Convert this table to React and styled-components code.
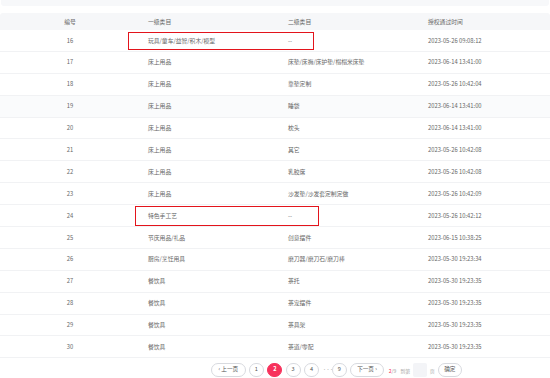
import React from 'react'
import styled, { createGlobalStyle } from 'styled-components'

const GlobalStyle = createGlobalStyle`
  html, body {
    margin: 0;
    padding: 0;
    background: #fff;
  }
  body {
    font-family: "Noto Sans CJK SC", "Noto Sans", sans-serif;
    color: #666;
  }
`

const rows = [
  { id: 16, first: '玩具/童车/益智/积木/模型', second: '--', time: '2023-05-26 09:08:12' },
  { id: 17, first: '床上用品', second: '床垫/床褥/床护垫/榻榻米床垫', time: '2023-06-14 13:41:00' },
  { id: 18, first: '床上用品', second: '靠垫定制', time: '2023-05-26 10:42:04' },
  { id: 19, first: '床上用品', second: '睡袋', time: '2023-06-14 13:41:00', hover: true },
  { id: 20, first: '床上用品', second: '枕头', time: '2023-06-14 13:41:00' },
  { id: 21, first: '床上用品', second: '其它', time: '2023-05-26 10:42:08' },
  { id: 22, first: '床上用品', second: '乳胶席', time: '2023-05-26 10:42:08' },
  { id: 23, first: '床上用品', second: '沙发垫/沙发套定制定做', time: '2023-05-26 10:42:09' },
  { id: 24, first: '特色手工艺', second: '--', time: '2023-05-26 10:42:12' },
  { id: 25, first: '节庆用品/礼品', second: '创意摆件', time: '2023-06-15 10:38:25' },
  { id: 26, first: '厨房/烹饪用具', second: '磨刀器/磨刀石/磨刀棒', time: '2023-05-30 19:23:34' },
  { id: 27, first: '餐饮具', second: '茶托', time: '2023-05-30 19:23:35' },
  { id: 28, first: '餐饮具', second: '茶宠摆件', time: '2023-05-30 19:23:35' },
  { id: 29, first: '餐饮具', second: '茶具架', time: '2023-05-30 19:23:35' },
  { id: 30, first: '餐饮具', second: '茶道/零配', time: '2023-05-30 19:23:35' },
]

const App = () => (
  <>
    <GlobalStyle />
    <Page>
      <TopStrip />
      <Table>
        <HeadRow>
          <Cell center>编号</Cell>
          <Cell>一级类目</Cell>
          <Cell>二级类目</Cell>
          <Cell>授权通过时间</Cell>
        </HeadRow>
        {rows.map((r) => (
          <Row key={r.id} $hover={r.hover}>
            <Cell center>{r.id}</Cell>
            <Cell>{r.first}</Cell>
            <Cell>{r.second}</Cell>
            <Cell>{r.time}</Cell>
          </Row>
        ))}
        <Mark $left={128} $top={19} $width={186} $height={18} />
        <Mark $left={135} $top={192.5} $width={184} $height={20} />
      </Table>
      <Pager>
        <PageButton $size={34.5}>‹ 上一页</PageButton>
        <PageButton>1</PageButton>
        <PageButton $active>2</PageButton>
        <PageButton>3</PageButton>
        <PageButton>4</PageButton>
        <Dots>···</Dots>
        <PageButton>9</PageButton>
        <PageButton $size={33.6}>下一页 ›</PageButton>
        <Count>
          <em>2</em>/9
        </Count>
        <Label>到第</Label>
        <Jump />
        <Label>页</Label>
        <PageButton $size={24}>确定</PageButton>
      </Pager>
    </Page>
  </>
)

const Page = styled.div`
  width: 550px;
  height: 378px;
  overflow: hidden;
`

const TopStrip = styled.div`
  height: 5.5px;
  margin: 0 1px;
  background: #f7f8fa;
  border-radius: 0 0 3px 3px;
`

const Table = styled.div`
  position: relative;
  margin-top: 7.5px;
  font-size: 5.8px;
`

const HeadRow = styled.div`
  display: grid;
  grid-template-columns: 140px 140px 140px 1fr;
  align-items: center;
  height: 17px;
  background: #f6f7f9;
  border-radius: 3px 3px 0 0;
  color: #666;
`

const Row = styled.div`
  display: grid;
  grid-template-columns: 140px 140px 140px 1fr;
  align-items: center;
  height: 21.9px;
  box-sizing: border-box;
  border-bottom: 0.6px solid #f1f2f4;
  background: ${({ $hover }) => ($hover ? '#fafbfc' : '#fff')};
  color: #666;
`

const Cell = styled.div`
  padding: 0 8px;
  text-align: ${({ center }) => (center ? 'center' : 'left')};
  white-space: nowrap;
  line-height: 1;
`

const Mark = styled.div`
  position: absolute;
  left: ${({ $left }) => $left}px;
  top: ${({ $top }) => $top}px;
  width: ${({ $width }) => $width}px;
  height: ${({ $height }) => $height}px;
  box-sizing: border-box;
  border: 1.5px solid #e3141c;
  pointer-events: none;
`

const Pager = styled.div`
  display: flex;
  align-items: center;
  margin-top: 4.5px;
  padding-left: 211px;
  font-size: 5.6px;
  color: #555;
`

const PageButton = styled.div`
  display: flex;
  align-items: center;
  justify-content: center;
  flex: none;
  box-sizing: border-box;
  height: 14.5px;
  width: ${({ $size }) => ($size || 15)}px;
  margin-right: 3.4px;
  border-radius: 8px;
  border: 0.7px solid ${({ $active }) => ($active ? '#f7325c' : '#d8dadf')};
  background: ${({ $active }) => ($active ? '#f7325c' : '#fff')};
  color: ${({ $active }) => ($active ? '#fff' : '#555')};
  font-weight: ${({ $active }) => ($active ? 700 : 400)};
  white-space: nowrap;
  line-height: 1;
`

const Dots = styled.span`
  width: 6px;
  margin-right: 3.4px;
  text-align: center;
  color: #999;
  font-size: 4px;
  letter-spacing: -0.5px;
`

const Count = styled.span`
  margin-left: 1.6px;
  margin-right: 4px;
  color: #999;
  font-size: 5px;
  em {
    font-style: normal;
    color: #f7325c;
  }
`

const Label = styled.span`
  color: #aaa;
  font-size: 5px;
  margin-right: 3px;
`

const Jump = styled.div`
  width: 13.4px;
  height: 14.5px;
  border-radius: 2px;
  background: #f3f4f7;
  margin-right: 3px;
`

export default App
